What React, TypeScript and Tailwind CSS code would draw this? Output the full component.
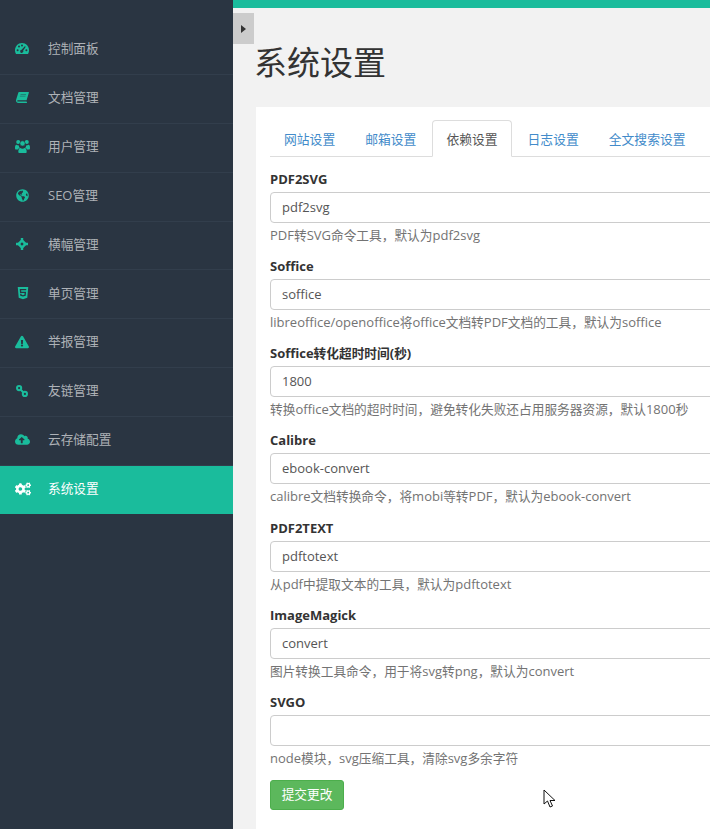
import { FaGlobeAmericas, FaHtml5, FaExclamationTriangle, FaCloudUploadAlt, FaCogs } from 'react-icons/fa';

const DashIcon = () => (
  <svg width="14" height="11" viewBox="0 0 14 11" fill="currentColor">
    <path d="M1 11C.3 10 0 8.8 0 7.3 0 3.2 3.1 0 7 0s7 3.2 7 7.3c0 1.5-.3 2.7-1 3.7z" />
    <g fill="#2a3542">
      <circle cx="2.6" cy="7.2" r="1" />
      <circle cx="4" cy="3.6" r="1" />
      <circle cx="7" cy="2.4" r="1" />
      <circle cx="11.4" cy="7.2" r="1" />
      <path d="M9.8 3.2 10.8 3.8 8.2 7.6a1.6 1.6 0 1 1-1.6-.9z" />
    </g>
  </svg>
);

const BookIcon = () => (
  <svg width="13" height="11" viewBox="0 0 13 11" fill="currentColor">
    <path d="M3 0h9.6c.3 0 .4.2.3.5L10.6 8.2H2.2c-.8 0-1 .4-1 .7 0 .4.3.7 1 .7h8.3l.5.8c.1.3 0 .6-.4.6H2.4C1 11 0 10 0 8.8c0-.4.1-.8.2-1.2L2.3.7C2.4.3 2.6 0 3 0z" />
    <path d="M4.6 2h5.6l-.2.7H4.4zM4 3.7h5.6l-.2.7H3.8z" fill="#2a3542" opacity=".55" />
  </svg>
);

const UsersIcon = () => (
  <svg width="15" height="13" viewBox="0 0 15 13" fill="currentColor">
    <circle cx="3.2" cy="2" r="2" />
    <circle cx="11.8" cy="2" r="2" />
    <circle cx="7.5" cy="3.4" r="2.6" stroke="#2a3542" strokeWidth=".6" />
    <path d="M0 8c0-2 .6-3.2 1.6-3.2.8.6 1.6.8 2.4.6-.2.8.1 1.700.8 2.300-.9.4-1.600 1-1.900 1.800H1C.4 9.500 0 9 0 8zM15 8c0-2-.6-3.200-1.600-3.200-.8.6-1.600.8-2.400.6.2.8-.1 1.700-.8 2.300.9.4 1.600 1 1.900 1.800H14c.6 0 1-.5 1-1.500z" />
    <path d="M4.200 13c-.6 0-.9-.4-.9-1 0-2 .6-4 2-4 .7.5 1.400.8 2.200.8s1.500-.3 2.200-.8c1.400 0 2 2 2 4 0 .6-.3 1-.9 1z" />
  </svg>
);

const CrossIcon = () => (
  <svg width="12" height="12" viewBox="0 0 12 12" fill="currentColor">
    <path fillRule="evenodd" d="M6 .8 11.200 6 6 11.200.8 6zM6 4.300 4.300 6 6 7.700 7.700 6z" />
    <path d="M4.800 0h2.400v3H4.800zM4.800 9h2.400v3H4.800zM0 4.800h3v2.400H0zM9 4.800h3v2.400H9z" />
  </svg>
);

const ChainIcon = () => (
  <svg width="12" height="12" viewBox="0 0 12 12" fill="none" stroke="currentColor" strokeWidth="2">
    <circle cx="3.100" cy="3.100" r="2.100" />
    <circle cx="8.900" cy="8.900" r="2.100" />
    <path d="M4.800 4.800 7.200 7.200" />
  </svg>
);

const menu = [
  { label: '控制面板', icon: <DashIcon /> },
  { label: '文档管理', icon: <span className="ml-px"><BookIcon /></span> },
  { label: '用户管理', icon: <UsersIcon /> },
  { label: 'SEO管理', icon: <FaGlobeAmericas className="ml-px text-[13px]" /> },
  { label: '横幅管理', icon: <span className="ml-px"><CrossIcon /></span> },
  { label: '单页管理', icon: <FaHtml5 className="ml-[1px] text-[14px]" /> },
  { label: '举报管理', icon: <FaExclamationTriangle className="text-[14px]" /> },
  { label: '友链管理', icon: <span className="ml-px"><ChainIcon /></span> },
  { label: '云存储配置', icon: <FaCloudUploadAlt className="text-[15px]" /> },
  { label: '系统设置', icon: <FaCogs className="text-[16px]" />, active: true },
];

const tabs = ['网站设置', '邮箱设置', '依赖设置', '日志设置', '全文搜索设置'];

const fields = [
  { label: 'PDF2SVG', value: 'pdf2svg', help: 'PDF转SVG命令工具，默认为pdf2svg' },
  { label: 'Soffice', value: 'soffice', help: 'libreoffice/openoffice将office文档转PDF文档的工具，默认为soffice' },
  { label: 'Soffice转化超时时间(秒)', value: '1800', help: '转换office文档的超时时间，避免转化失败还占用服务器资源，默认1800秒' },
  { label: 'Calibre', value: 'ebook-convert', help: 'calibre文档转换命令，将mobi等转PDF，默认为ebook-convert' },
  { label: 'PDF2TEXT', value: 'pdftotext', help: '从pdf中提取文本的工具，默认为pdftotext' },
  { label: 'ImageMagick', value: 'convert', help: '图片转换工具命令，用于将svg转png，默认为convert' },
  { label: 'SVGO', value: '', help: 'node模块，svg压缩工具，清除svg多余字符' },
];

// chinese runs are a touch narrower than the latin in the screenshot
const Mixed = ({ text }: { text: string }) => (
  <>
    {text.split(/([\u4e00-\u9fff，]+)/).map((part, i) =>
      i % 2 ? (
        <span key={i} className="text-[12.7px]">{part}</span>
      ) : (
        part
      )
    )}
  </>
);

export default function App() {
  return (
    <div className="relative flex h-[829px] w-[710px] overflow-hidden bg-[#f2f2f2] font-['Open_Sans','Noto_Sans_CJK_SC',sans-serif] text-[13px] text-[#797979]">
      {/* Sidebar */}
      <aside className="w-[233px] shrink-0 bg-[#2a3542] pt-[26px]">
        {menu.map((item) => (
          <div
            key={item.label}
            className={`flex items-center pb-[2px] pl-[15px] ${
              item.active ? 'h-[48px] bg-[#1abc9c] text-white' : 'h-[48.875px] border-b border-[#323e4c] text-[#aeb2b7]'
            }`}
          >
            <span className={`flex w-[33px] shrink-0 items-center ${item.active ? 'text-white' : 'text-[#1abc9c]'}`}>
              {item.icon}
            </span>
            <span><Mixed text={item.label} /></span>
          </div>
        ))}
      </aside>

      {/* Main */}
      <main className="relative min-w-0 flex-1">
        <div className="h-2 bg-[#1abc9c]" />
        <div className="absolute left-0 top-[13px] flex h-[31px] w-[21px] items-center justify-center bg-[#cccccc]">
          <span className="h-0 w-0 border-y-[4px] border-l-[5px] border-y-transparent border-l-[#333]" />
        </div>
        <h1 className="ml-[21px] mt-[32px] text-[33px] font-normal leading-[46px] text-[#333]">系统设置</h1>
        <section className="ml-[23px] mt-[21px] h-[722px] w-[600px] bg-white px-[14px] pt-[13px]">
          <ul className="flex border-b border-[#ddd] pl-0">
            {tabs.map((tab, i) => (
              <li
                key={tab}
                className={`-mb-px mr-[2px] h-[37px] rounded-t-[4px] border px-[13px] text-[12.8px] leading-[36px] ${
                  i === 2 ? 'border-[#ddd] border-b-white bg-white text-[#555]' : 'border-transparent text-[#428bca]'
                }`}
              >
                {tab}
              </li>
            ))}
          </ul>
          <form className="mt-[13px]">
            {fields.map((f) => (
              <div key={f.label} className="mb-[13px] h-[74.15px]">
                <label className="block h-[19px] font-bold leading-[19px] text-[#333]"><Mixed text={f.label} /></label>
                <input
                  readOnly
                  value={f.value}
                  className="mt-[3px] block h-[31px] w-full rounded-[4px] border border-[#ccc] px-[11px] pb-[1px] text-[13px] text-[#555] outline-none"
                />
                <p className="mt-[3px] leading-[18px] text-[#737373]"><Mixed text={f.help} /></p>
              </div>
            ))}
            <button type="button" className="h-[30px] w-[74px] rounded-[3px] border border-[#4cae4c] bg-[#5cb85c] text-center text-[12.7px] text-white">
              提交更改
            </button>
          </form>
        </section>
      </main>

      {/* Mouse pointer */}
      <svg className="absolute left-[543px] top-[789px]" width="14" height="20" viewBox="0 0 14 20">
        <path d="M1 1 L1 15 L4.5 12 L7 18 L9.5 17 L7 11.5 L12 11.5 Z" fill="#fff" stroke="#111" strokeWidth="1" />
      </svg>
    </div>
  );
}
